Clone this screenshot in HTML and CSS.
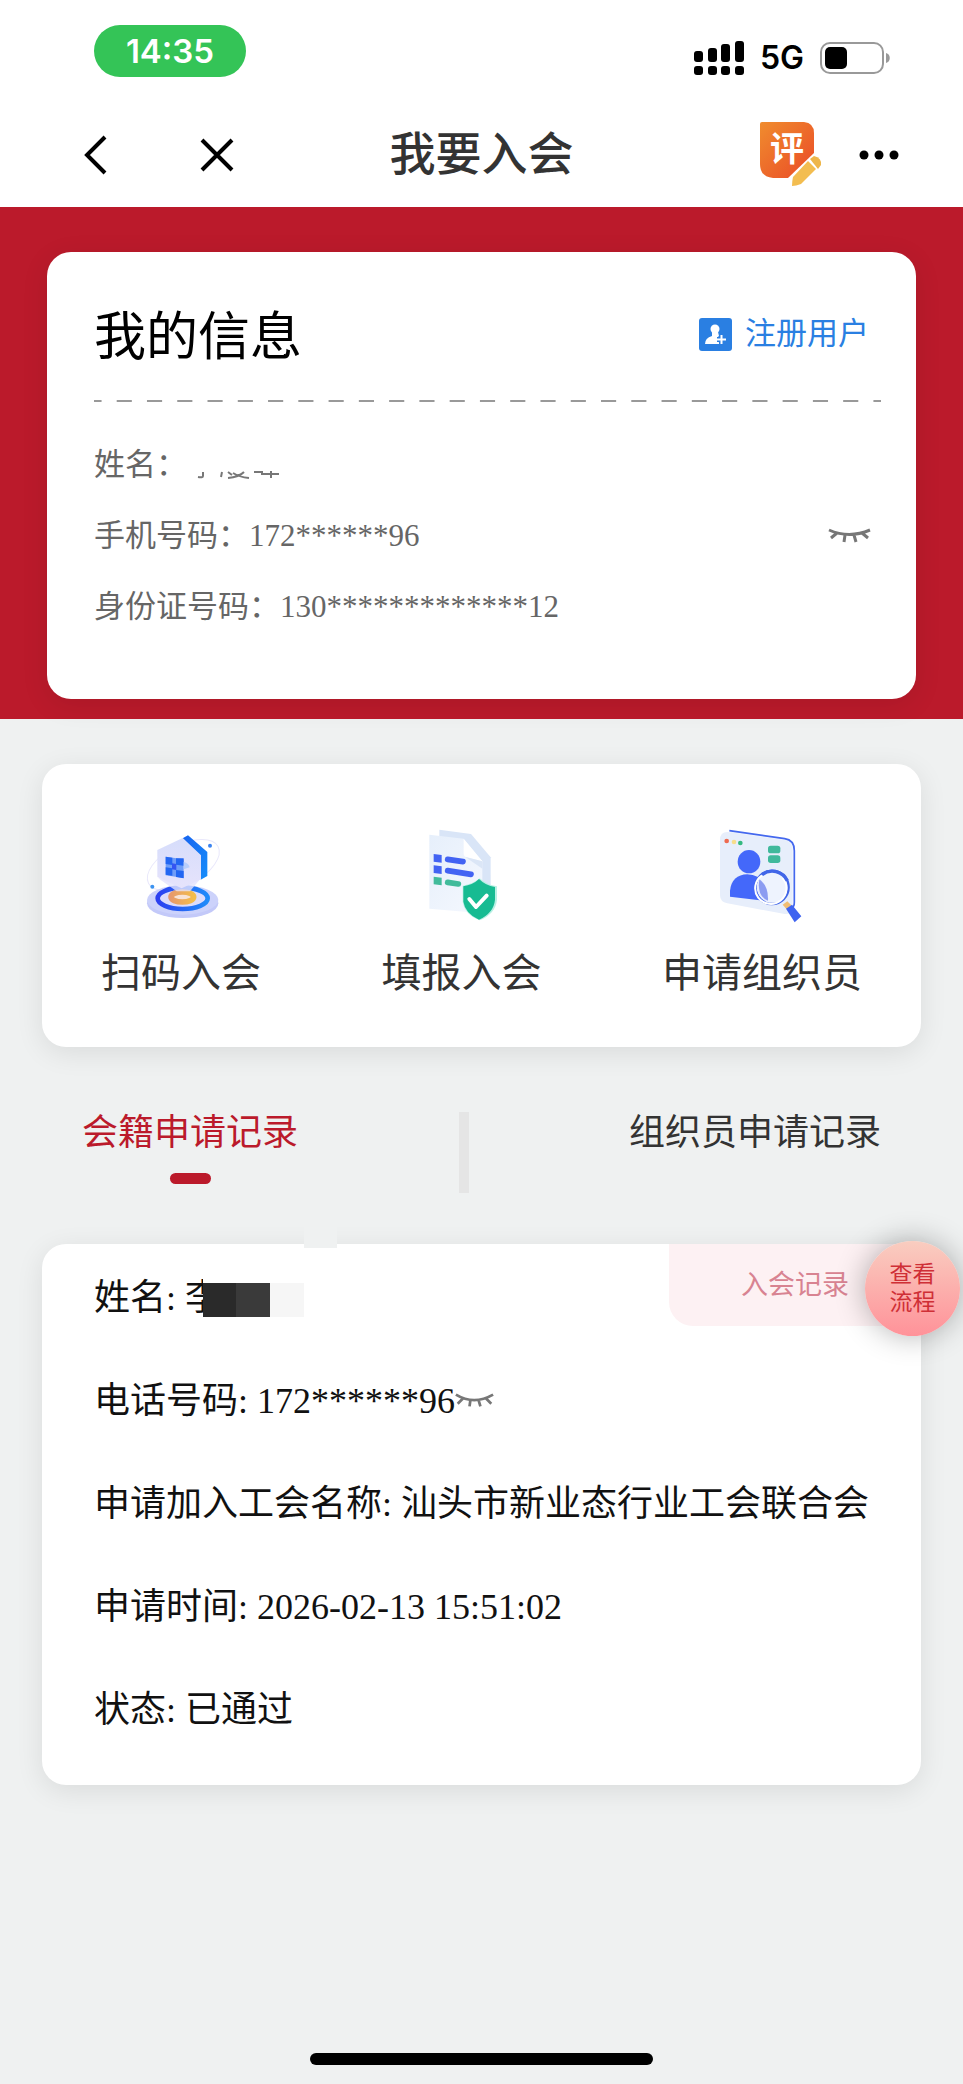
FILE: index.html
```html
<!DOCTYPE html>
<html lang="zh-CN">

<head>
    <meta charset="UTF-8">
    <meta name="viewport" content="width=device-width, initial-scale=1.0">
    <title>我要入会</title>
    <link rel="stylesheet" href="styles.css">
</head>

<body>
    <div class="page">
        <header class="top">
            <div class="status_bar">
                <span class="time">14:35</span>
                <div class="status_right">
                    <svg class="signal" viewBox="0 0 50 34" aria-hidden="true">
                        <rect x="0" y="10" width="9" height="11" rx="3" />
                        <rect x="14" y="7" width="9" height="14" rx="3" />
                        <rect x="27" y="3" width="9" height="18" rx="3" />
                        <rect x="41" y="0" width="9" height="21" rx="3" />
                        <rect x="0" y="25" width="9" height="9" rx="3" />
                        <rect x="14" y="25" width="9" height="9" rx="3" />
                        <rect x="27" y="25" width="9" height="9" rx="3" />
                        <rect x="41" y="25" width="9" height="9" rx="3" />
                    </svg>
                    <span class="network">5G</span>
                    <svg class="battery" viewBox="0 0 70 32" aria-hidden="true">
                        <rect x="1" y="1" width="62" height="30" rx="9" fill="none" stroke="#999" stroke-width="2" />
                        <rect x="5" y="5" width="22" height="22" rx="5" />
                        <path d="M66 11c5 1 5 9 0 10z" fill="#999" />
                    </svg>
                </div>
            </div>
            <nav class="nav_bar">
                <div class="nav_left">
                    <button type="button" class="icon_btn" aria-label="返回">
                        <svg width="24" height="40" viewBox="0 0 24 40"><path d="M21 2L3 20l18 18" fill="none" stroke="#000" stroke-width="4" /></svg>
                    </button>
                    <button type="button" class="icon_btn" aria-label="关闭">
                        <svg width="34" height="34" viewBox="0 0 34 34"><path d="M2 2l30 30M32 2L2 32" fill="none" stroke="#000" stroke-width="4" /></svg>
                    </button>
                </div>
                <h1 class="nav_title">我要入会</h1>
                <div class="nav_right">
                    <button type="button" class="icon_btn" aria-label="评价">
                        <svg width="62" height="66" viewBox="0 0 62 66">
                            <defs>
                                <linearGradient id="rate" x1="0" y1="0" x2="1" y2="1">
                                    <stop offset="0" stop-color="#f08c2e" />
                                    <stop offset="1" stop-color="#ea4a27" />
                                </linearGradient>
                            </defs>
                            <path d="M2 0h42q10 1 10 11v20L28 56H13Q0 55 0 42V2q0-2 2-2z" fill="url(#rate)" />
                            <text class="rate_text" x="27" y="39" text-anchor="middle">评</text>
                            <path d="M50 37l4-3q8 2 7 9l-3 4z" fill="#eeb649" />
                            <path d="M48 39l8 8-15 15q-5 2-9 2 0-5 1-9z" fill="#f3bd50" />
                        </svg>
                    </button>
                    <button type="button" class="icon_btn" aria-label="更多">
                        <svg width="40" height="10" viewBox="0 0 40 10"><circle cx="5" cy="5" r="4.500" /><circle cx="20" cy="5" r="4.500" /><circle cx="35" cy="5" r="4.500" /></svg>
                    </button>
                </div>
            </nav>
        </header>

        <section class="banner">
            <div class="card info_card">
                <div class="info_head">
                    <h2>我的信息</h2>
                    <a href="#" class="register">
                        <svg width="33" height="33" viewBox="0 0 33 33" aria-hidden="true">
                            <rect width="33" height="33" rx="3" fill="#2a7fe2" />
                            <circle cx="16" cy="11" r="4.500" fill="#fff" />
                            <path d="M13 14h6l1 4q-3 2-1 5l2 3H6q0-6 7-8z" fill="#fff" />
                            <path d="M22.500 17v9M18 21.500h9" stroke="#2a7fe2" stroke-width="5" />
                            <path d="M22.500 17v9M18 21.500h9" stroke="#fff" stroke-width="2" />
                        </svg>
                        注册用户
                    </a>
                </div>
                <svg class="dash_line" aria-hidden="true"><line x1="0" y1="1" x2="100%" y2="1" pathLength="520" /></svg>
                <div class="info_list">
                    <p>姓名：
                        <svg class="name_rest" width="86" height="8" viewBox="0 0 86 8" aria-label="已隐藏">
                            <path d="M8 1v4q0 2-5 1M27 1l-1 5M33 1l4 3M49 1q-5 5-16 6M38 2q6 4 16 5M59 1h9M66 3h18M76 0v7" />
                        </svg>
                    </p>
                    <p class="with_eye"><span>手机号码：172******96</span>
                        <button type="button" class="icon_btn" aria-label="显示号码">
                            <svg width="43" height="15" viewBox="0 0 43 15"><path class="eye" d="M1 2q20 9 41 0M9 5l-6 5M17 7l-1 7M26 7l2 7M34 5l6 5" /></svg>
                        </button>
                    </p>
                    <p>身份证号码：130*************12</p>
                </div>
            </div>
        </section>

        <main class="content">
            <div class="card menu">
                <a href="#" class="menu_item">
                    <svg class="menu_icon" viewBox="315 234 276 288" aria-hidden="true">
                        <defs>
                            <linearGradient id="houseSide" x1="0" y1="0" x2="1" y2="1">
                                <stop offset="0" stop-color="#1764ef" />
                                <stop offset="1" stop-color="#168dfb" />
                            </linearGradient>
                            <linearGradient id="houseFront" x1="0" y1="0" x2="0" y2="1">
                                <stop offset="0" stop-color="#d6ddfb" />
                                <stop offset="1" stop-color="#e6e3fc" />
                            </linearGradient>
                            <linearGradient id="ring" x1="0" y1="0" x2="1" y2="0">
                                <stop offset="0" stop-color="#2b3ff0" />
                                <stop offset="1" stop-color="#1f8bfa" />
                            </linearGradient>
                            <linearGradient id="gold" x1="0" y1="0" x2="1" y2="0">
                                <stop offset="0" stop-color="#e79a6c" />
                                <stop offset="1" stop-color="#f3bd4b" />
                            </linearGradient>
                        </defs>
                        <ellipse cx="460" cy="345" rx="118" ry="60" transform="rotate(-28 460 345)" fill="none" stroke="#e9e8fb" stroke-width="3" />
                        <ellipse cx="458" cy="460" rx="107" ry="44" fill="#c3c9f9" />
                        <ellipse cx="458" cy="450" rx="107" ry="44" fill="#ccd2fb" />
                        <ellipse cx="458" cy="445" rx="75" ry="32" fill="#dcdcfb" stroke="url(#ring)" stroke-width="14" />
                        <ellipse cx="457" cy="441" rx="34" ry="15" fill="#f8e3d6" stroke="url(#gold)" stroke-width="17" />
                        <path d="M385 385L440 424h40l30-36z" fill="#e4e2fd" opacity=".8" />
                        <path d="M458 265l16-9 58 50v72l-20 11V318z" fill="url(#houseSide)" />
                        <path d="M382 300l76-36 55 52v72l-58 27-73-34z" fill="url(#houseFront)" />
                        <path d="M407 320l54 8v56l-54-8z" fill="#6f9df8" />
                        <path d="M407 320l20 3v22l-20-3zM438 325h23v22l-23-3zM407 352l20 3v22l-20-3zM438 360l23 3v22l-23-4z" fill="#2366f2" />
                        <path d="M426 340l13 2v18l-13-2z" fill="#3454f2" />
                        <path d="M461 336q16 4 18 16l-18 6z" fill="#b8cdfb" />
                        <circle cx="540" cy="287" r="6" fill="#3b83f0" />
                        <circle cx="367" cy="410" r="6" fill="#3b93f0" />
                    </svg>
                    <span>扫码入会</span>
                </a>
                <a href="#" class="menu_item">
                    <svg class="menu_icon" viewBox="165 114 276 288" aria-hidden="true">
                        <defs>
                            <linearGradient id="paper" x1="0" y1="0" x2="1" y2="1">
                                <stop offset="0" stop-color="#e6effb" />
                                <stop offset="1" stop-color="#f5f8fe" />
                            </linearGradient>
                        </defs>
                        <path d="M235 119l95 13 59 70v84l-154-30z" fill="#d9e5f7" />
                        <path d="M205 134l103 12 56 68v156l-159-14z" fill="url(#paper)" />
                        <path d="M308 146v46q1 9 12 11l44 11z" fill="#fff" />
                        <path d="M312 200l52 14v22z" fill="#dbe6f6" />
                        <path d="M218 192l24 3v23l-24-3zM218 226l24 3v23l-24-3z" fill="#4263f3" />
                        <path d="M218 260l24 3v23l-24-3z" fill="#41bb9b" />
                        <path d="M260 208l46 7M260 242l70 11" stroke="#4263f3" stroke-width="17" stroke-linecap="round" />
                        <path d="M260 277l32 5" stroke="#41bb9b" stroke-width="17" stroke-linecap="round" />
                        <path d="M356 265q22 20 52 24v40q-4 42-52 62-45-18-51-56v-48q30-4 51-22z" fill="#b9f0e4" />
                        <path d="M354 267q20 20 48 24v38q-4 40-48 60-41-18-47-54v-46q28-4 47-22z" fill="#17bb92" />
                        <path d="M325 327l20 24 32-34" fill="none" stroke="#fff" stroke-width="12" stroke-linecap="round" stroke-linejoin="round" />
                    </svg>
                    <span>填报入会</span>
                </a>
                <a href="#" class="menu_item">
                    <svg class="menu_icon" viewBox="228 114 276 288" aria-hidden="true">
                        <path d="M268 122l166 24q29 4 29 36v155q0 14-8 17" fill="#eef3fd" stroke="#4468ee" stroke-width="5" />
                        <path d="M262 126l170 24q24 4 24 30v170q0 24-22 22l-172-32q-22-4-22-24V150q0-24 22-24z" fill="#e7eefb" />
                        <circle cx="260" cy="153" r="7" fill="#ee6a50" />
                        <circle cx="282" cy="156" r="7" fill="#f7dd8c" />
                        <circle cx="301" cy="159" r="7" fill="#35b980" />
                        <rect x="384" y="167" width="37" height="23" rx="8" fill="#40b99c" />
                        <rect x="384" y="196" width="37" height="23" rx="8" fill="#40b99c" />
                        <ellipse cx="327" cy="215" rx="34" ry="35" fill="#4468fa" />
                        <path d="M270 320v-18q6-48 52-49 46 2 58 46v34z" fill="#4468fa" />
                        <circle cx="396" cy="292" r="46" fill="#eef2fe" opacity=".95" />
                        <path d="M358 268q28 20 26 64-34-14-26-64z" fill="#6d82ec" opacity=".75" />
                        <circle cx="396" cy="292" r="50" fill="none" stroke="#4166e8" stroke-width="7" />
                        <path d="M428 264a47 47 0 1 1-62-8" fill="none" stroke="#fff" stroke-width="6" />
                        <path d="M366 254a50 50 0 0 1 76 18" fill="none" stroke="#4166e8" stroke-width="10" />
                        <path d="M428 344l14-10 12 12-14 12z" fill="#f1bd72" />
                        <path d="M438 356l18-12 28 35-20 18z" fill="#3f63f0" />
                    </svg>
                    <span>申请组织员</span>
                </a>
            </div>

            <div class="tabs" role="tablist">
                <button type="button" class="tab tab_active" role="tab" aria-selected="true">会籍申请记录</button>
                <span class="tab_line"></span>
                <button type="button" class="tab" role="tab" aria-selected="false">组织员申请记录</button>
            </div>

            <div class="card record">
                <span class="patch"></span>
                <span class="record_tag">入会记录</span>
                <p>姓名: <span class="hidden_name">李<i class="mask"></i></span></p>
                <p>电话号码: 172******96<button type="button" class="icon_btn" aria-label="显示电话"><svg width="39" height="17" viewBox="0 0 43 17"><path class="eye" d="M1 2q20 12 41 0M9 6l-6 6M17 8l-1 7M26 8l2 7M34 6l6 6" /></svg></button></p>
                <p>申请加入工会名称: 汕头市新业态行业工会联合会</p>
                <p>申请时间: 2026-02-13 15:51:02</p>
                <p>状态: 已通过</p>
                <button type="button" class="flow_btn">查看<br>流程</button>
            </div>
        </main>

        <div class="home_bar"></div>
    </div>
</body>

</html>
```
FILE: styles.css
```css
* {
    margin: 0;
    padding: 0;
    box-sizing: border-box;
}

body {
    background-color: #eff1f1;
    font-family: "Liberation Serif", "Noto Sans CJK SC", sans-serif;
    color: #111;
}

a {
    color: inherit;
    text-decoration: none;
}

button {
    border: none;
    background: none;
    font-family: inherit;
    color: inherit;
    cursor: pointer;
}

svg {
    display: block;
}

.page {
    display: flex;
    flex-direction: column;
    min-height: 100vh;
    overflow: hidden;
}

.icon_btn {
    display: block;
}

.card {
    background-color: #fff;
    border-radius: 24px;
    box-shadow: 0 6px 28px rgba(0, 0, 0, 0.09);
}

.eye {
    fill: none;
    stroke: #777;
    stroke-width: 3;
}

/* 顶部 */
.top {
    background-color: #fff;
}

.status_bar {
    display: flex;
    justify-content: space-between;
    align-items: center;
    height: 102px;
    padding: 0 73px 0 94px;
    font-family: Inter, sans-serif;
    font-weight: 600;
}

.time {
    width: 152px;
    border-radius: 26px;
    background-color: #34c457;
    color: #fff;
    font-size: 33px;
    line-height: 52px;
    text-align: center;
}

.status_right {
    display: flex;
    align-items: center;
    gap: 16px;
    padding-top: 14px;
}

.signal {
    width: 50px;
    height: 34px;
}

.network {
    font-size: 32px;
    line-height: 34px;
    color: #000;
}

.battery {
    width: 70px;
    height: 32px;
}

.nav_bar {
    display: grid;
    grid-template-columns: 1fr auto 1fr;
    align-items: center;
    height: 105px;
    padding: 0 64px;
}

.nav_left,
.nav_right {
    display: flex;
    align-items: center;
}

.nav_left {
    gap: 92px;
    padding-left: 20px;
}

.nav_right {
    justify-content: flex-end;
    gap: 37px;
}

.nav_title {
    font-size: 46px;
    font-weight: 500;
    line-height: 60px;
    color: #333;
}

.rate_text {
    font-family: "Noto Sans CJK SC", sans-serif;
    font-size: 34px;
    font-weight: 700;
    fill: #fff;
}

/* 我的信息 */
.banner {
    padding: 45px 47px 20px;
    background-color: #bb1a2b;
}

.info_card {
    padding: 50px 35px 57px 47px;
}

.info_head {
    display: flex;
    justify-content: space-between;
    padding: 0 12px 26px 0;
}

.info_head h2 {
    font-size: 52px;
    font-weight: 400;
    line-height: 72px;
    color: #000;
}

.register {
    display: flex;
    align-items: center;
    gap: 13px;
    height: 64px;
    font-size: 31px;
    line-height: 64px;
    color: #2a7fe2;
}

.dash_line {
    width: 100%;
    height: 2px;
}

.dash_line line {
    stroke: #999;
    stroke-width: 2;
    stroke-dasharray: 10 10;
    stroke-dashoffset: 5;
}

.info_list {
    margin-top: 27px;
    font-size: 31px;
    line-height: 71px;
    color: #666;
}

.with_eye {
    display: flex;
    justify-content: space-between;
    align-items: center;
    padding-right: 10px;
}

.name_rest {
    display: inline-block;
    fill: none;
    stroke: #777;
    stroke-width: 2;
    vertical-align: -4px;
}

/* 菜单 */
.content {
    padding: 45px 42px;
}

.menu {
    display: flex;
    justify-content: space-between;
    padding: 64px 59px 45px;
}

.menu_item {
    display: flex;
    flex-direction: column;
    align-items: center;
    gap: 22px;
    font-size: 40px;
    line-height: 56px;
    color: #333;
}

.menu_icon {
    width: 92px;
    height: 96px;
}

/* 记录 */
.tabs {
    display: flex;
    justify-content: space-between;
    align-items: flex-start;
    padding: 65px 40px 51px;
}

.tab {
    font-size: 36px;
    line-height: 42px;
    color: #333;
}

.tab_active {
    color: #bb1a2b;
}

.tab_active::after {
    content: "";
    display: block;
    width: 41px;
    height: 11px;
    margin: 19px auto 0;
    border-radius: 6px;
    background-color: #bb1a2b;
}

.tab_line {
    width: 10px;
    height: 81px;
    background-color: #e5e5e5;
}

.record {
    position: relative;
    padding: 3px 50px 23px 52px;
    font-size: 36px;
    line-height: 103px;
}

.record .icon_btn {
    display: inline-block;
    vertical-align: 4px;
}

.record_tag {
    position: absolute;
    top: 0;
    right: 0;
    padding: 0 72px;
    border-radius: 0 24px 0 24px;
    background-color: #fdf1f3;
    color: #d88391;
    font-size: 27px;
    line-height: 82px;
}

.hidden_name {
    position: relative;
}

.mask {
    position: absolute;
    top: 5px;
    left: 18px;
    width: 101px;
    height: 34px;
    background: linear-gradient(to right, #2a2a2a 33%, #3a3a3a 33%, #3a3a3a 66%, #f6f6f6 66%);
}

.mask::before {
    content: "";
    display: block;
    height: 20px;
    margin-top: -20px;
    background-color: #fff;
}

.patch {
    position: absolute;
    top: -29px;
    left: 262px;
    width: 33px;
    height: 33px;
    background-color: #eff1f1;
}

.flow_btn {
    position: absolute;
    top: -3px;
    right: -39px;
    width: 95px;
    height: 95px;
    border-radius: 50%;
    background: linear-gradient(#f9cdc0, #ff9299);
    box-shadow: 0 0 30px rgba(0, 0, 0, 0.3);
    color: #cf2f36;
    font-size: 23px;
    line-height: 28px;
}

.home_bar {
    width: 343px;
    height: 12px;
    margin: auto auto 19px;
    border-radius: 6px;
    background-color: #000;
}
```
